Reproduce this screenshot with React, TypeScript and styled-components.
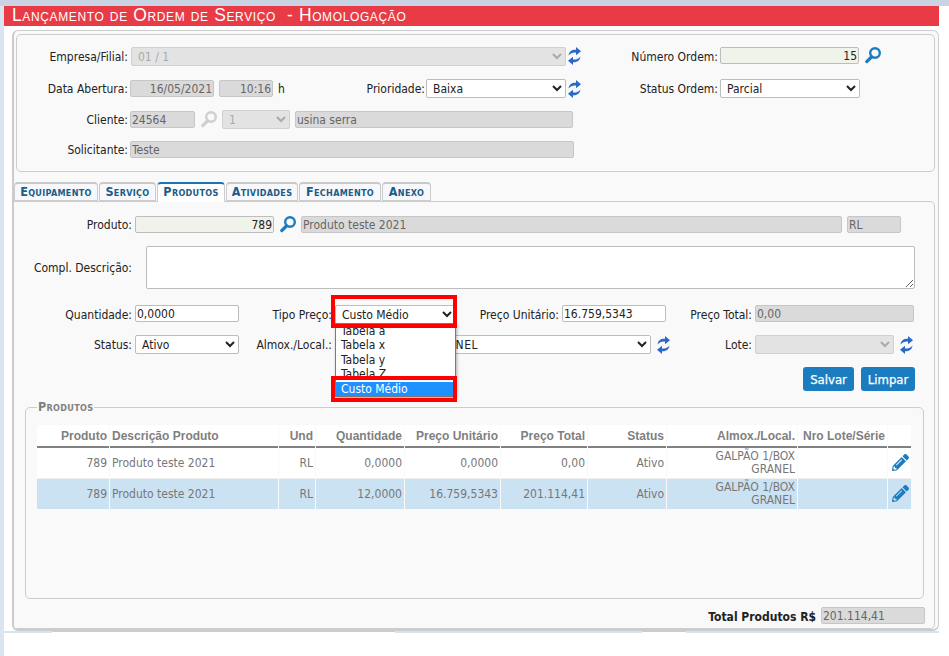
import React from 'react';
import styled, { createGlobalStyle } from 'styled-components';
import { FaPencilAlt } from 'react-icons/fa';

const GlobalStyle = createGlobalStyle`
  html, body {
    margin: 0;
    padding: 0;
    background: #fff;
  }
  body, input, select, textarea {
    font-family: "DejaVu Sans Condensed", "DejaVu Sans", sans-serif;
    font-size: 12px;
  }
`;

const Page = styled.div`
  width: 949px;
  height: 656px;
  overflow: hidden;
  display: flex;
  flex-direction: column;
  background: #fff;
`;

const TopBar = styled.div`
  height: 6px;
  flex: none;
  background: #c9d3e3;
`;

const Body = styled.div`
  flex: 1;
  border-left: 4px solid #dbe5f2;
`;

const Heading = styled.h1`
  width: 927px;
  height: 20px;
  margin: 0;
  padding-left: 8px;
  background: #e93b45;
  color: #fff;
  font-family: "Liberation Sans", sans-serif;
  font-size: 17.5px;
  font-weight: 400;
  font-variant: small-caps;
  letter-spacing: 0.62px;
  line-height: 19px;
  white-space: pre;
`;

const Card = styled.div`
  box-sizing: border-box;
  width: 927px;
  height: 601px;
  margin: 4px 0 0 8px;
  background: #f9f9f9;
  border: 1px solid #ccc;
  border-left-width: 2px;
  border-bottom-width: 2px;
  border-radius: 6px;
`;

const HeadBox = styled.div`
  box-sizing: border-box;
  width: 919px;
  height: 138px;
  margin: 3px 0 0 2px;
  border: 1px solid #ccc;
  border-radius: 5px;
`;

const Row = styled.div<{ $mt?: number; $h?: number; $top?: boolean; $end?: boolean }>`
  display: flex;
  align-items: ${p => (p.$top ? 'flex-start' : 'center')};
  justify-content: ${p => (p.$end ? 'flex-end' : 'flex-start')};
  height: ${p => p.$h ?? 19}px;
  margin-top: ${p => p.$mt ?? 0}px;
  padding-right: ${p => (p.$end ? 9 : 0)}px;
`;

const Label = styled.label<{ $w: number; $bold?: boolean }>`
  flex: none;
  align-self: center;
  width: ${p => p.$w}px;
  text-align: right;
  color: #222;
  white-space: nowrap;
  font-weight: ${p => (p.$bold ? 700 : 400)};
`;

const Input = styled.input<{ $w: number; $ml?: number; $tone?: 'off' | 'key' | 'on'; $right?: boolean }>`
  box-sizing: border-box;
  flex: none;
  width: ${p => p.$w}px;
  height: 17px;
  margin: 0 0 0 ${p => p.$ml ?? 2}px;
  padding: 0 1px;
  border: 1px solid ${p => (p.$tone === 'off' ? '#c6c6c6' : '#bdbdbd')};
  border-radius: 2px;
  outline: none;
  color: ${p => (p.$tone === 'off' ? '#666' : '#222')};
  background: ${p => (p.$tone === 'off' ? '#dadada' : p.$tone === 'key' ? '#f0f3ea' : '#fff')};
  text-align: ${p => (p.$right ? 'right' : 'left')};
`;

const Select = styled.select<{ $w: number; $ml?: number; $track?: boolean }>`
  box-sizing: border-box;
  flex: none;
  width: ${p => p.$w}px;
  height: 19px;
  margin: 0 0 0 ${p => p.$ml ?? 2}px;
  padding: 0 0 0 2px;
  border: 1px solid #bdbdbd;
  border-radius: 2px;
  outline: none;
  color: #222;
  background: #fff;
  letter-spacing: ${p => (p.$track ? '0.5px' : 'normal')};

  &:disabled {
    background: #e3e3e3;
    color: #aaa;
    border-color: #d0d0d0;
    opacity: 1;
  }
`;

const Unit = styled.span`
  flex: none;
  align-self: center;
  width: 12px;
  margin-left: 5px;
  color: #222;
`;

const IconSlot = styled.span<{ $ml: number; $w: number }>`
  flex: none;
  display: flex;
  width: ${p => p.$w}px;
  margin-left: ${p => p.$ml}px;
`;

const Tabs = styled.div`
  display: flex;
  gap: 1px;
  height: 19px;
  margin-top: 10px;
  position: relative;
  z-index: 1;
`;

const Tab = styled.div<{ $w: number; $active?: boolean }>`
  box-sizing: border-box;
  width: ${p => p.$w}px;
  height: ${p => (p.$active ? 20 : 19)}px;
  border: 1px solid #ccc;
  border-top: 2px solid ${p => (p.$active ? '#1b75bb' : '#c8c8c8')};
  border-bottom: ${p => (p.$active ? 'none' : '1px solid #ccc')};
  border-radius: 4px 4px 0 0;
  background: ${p => (p.$active ? '#fff' : '#f6f8fc')};
  color: #1b5c88;
  font-size: 12.5px;
  font-weight: 700;
  font-variant: small-caps;
  letter-spacing: 0.3px;
  line-height: 15px;
  text-align: center;
  white-space: nowrap;
`;

const TabPanel = styled.div`
  box-sizing: border-box;
  width: 921px;
  height: 428px;
  border-top: 1px solid #ccc;
  border-right: 1px solid #ccc;
  border-bottom: 1px solid #ccc;
  border-radius: 0 5px 5px 0;
`;

const Area = styled.textarea`
  box-sizing: border-box;
  flex: none;
  width: 769px;
  height: 43px;
  margin-left: 14px;
  border: 1px solid #bdbdbd;
  border-radius: 2px;
  outline: none;
  background: #fff;
`;

const PriceSelect = styled.div`
  position: relative;
  flex: none;
  display: flex;
  width: 121px;
  margin-left: 3px;
  z-index: 2;
`;

const OptionList = styled.ul`
  position: absolute;
  left: 0;
  top: 18px;
  box-sizing: border-box;
  width: 121px;
  height: 74px;
  margin: 0;
  padding: 0;
  list-style: none;
  overflow: hidden;
  background: #fff;
  border: 1px solid #7a7a7a;
  box-shadow: 1px 2px 3px rgba(0, 0, 0, 0.3);
`;

const OptionItem = styled.li<{ $picked?: boolean }>`
  height: 14.4px;
  padding-left: 5px;
  line-height: 14px;
  color: ${p => (p.$picked ? '#fff' : '#222')};
  background: ${p => (p.$picked ? '#1e90ff' : 'transparent')};
`;

const Highlight = styled.div<{ $top: number; $h: number }>`
  position: absolute;
  left: -4px;
  top: ${p => p.$top}px;
  box-sizing: border-box;
  width: 126px;
  height: ${p => p.$h}px;
  border: 4px solid #f00;
  pointer-events: none;
`;

const ButtonRow = styled.div`
  display: flex;
  justify-content: flex-end;
  gap: 7px;
  margin-top: 13px;
  padding-right: 19px;
`;

const ActionButton = styled.button<{ $w: number }>`
  width: ${p => p.$w}px;
  height: 24px;
  padding: 0;
  border: none;
  border-radius: 3px;
  background: #1b7dbf;
  color: #fff;
  font-family: "DejaVu Sans Condensed", sans-serif;
  font-size: 13px;
  font-weight: 400;
  -webkit-text-stroke: 0.25px #fff;
`;

const ListBox = styled.fieldset`
  box-sizing: border-box;
  width: 899px;
  height: 199px;
  margin: 9px 0 0 11px;
  padding: 0 0 0 11px;
  border: 1px solid #ccc;
  border-radius: 5px;
`;

const ListTitle = styled.legend`
  margin-left: 0;
  padding: 0 1px;
  color: #7f7f7f;
  font-size: 12.5px;
  font-weight: 700;
  font-variant: small-caps;
  letter-spacing: 0.3px;
  line-height: 14px;
`;

const Table = styled.table`
  width: 876px;
  margin: 11px 0 0 -1px;
  border-collapse: separate;
  border-spacing: 1px 0;
  table-layout: fixed;
`;

const Th = styled.th<{ $left?: boolean }>`
  height: 21px;
  padding: 0 2px;
  background: #fff;
  border-bottom: 2px solid #808080;
  color: #7f7f7f;
  font-family: "Liberation Sans", sans-serif;
  font-size: 12px;
  font-weight: 700;
  text-align: ${p => (p.$left ? 'left' : 'right')};
  white-space: nowrap;
`;

const Tr = styled.tr<{ $on?: boolean }>`
  & > td {
    background: ${p => (p.$on ? '#cbe2f3' : '#fff')};
    border-bottom: ${p => (p.$on ? '0' : '1px solid #f0f0f0')};
  }
`;

const Td = styled.td<{ $left?: boolean }>`
  height: 30px;
  padding: 0 2px;
  color: #777;
  line-height: 13px;
  text-align: ${p => (p.$left ? 'left' : 'right')};
`;

const EditCell = styled.td`
  box-sizing: border-box;
  height: 30px;
  padding: 2px 0 0 4px;
  color: #1b7dbf;
  font-size: 17px;
  line-height: 17px;
`;

const FootStrip = styled.div`
  display: flex;
  height: 2px;
  width: 935px;
`;

const FootPart = styled.div<{ $w: number; $open?: boolean }>`
  width: ${p => p.$w}px;
  background: ${p => (p.$open ? '#fff' : '#d5e5ee')};
  border-top: ${p => (p.$open ? '1px solid #ccc' : '0')};
`;

const Sync = () => (
  <svg width="13" height="18" viewBox="0 0 13 18" fill="#2a68c8">
    <path d="M.5 8.5C1 4.5 4 2.5 8 2.8V0l5 4.3-5 4V5.5C5 5.2 2.5 6 .5 8.5Z" />
    <path d="M12.5 9.5C12 13.5 9 15.5 5 15.2V18l-5-4.3 5-4v2.8c3 .3 5.5-.5 7.5-3Z" />
  </svg>
);

const Lens = ({ off }: { off?: boolean }) => {
  const tint = off ? '#cfcfcf' : '#1b7dbf';
  return (
    <svg width="16" height="17" viewBox="0 0 16 17" fill="none" stroke={tint}>
      <circle cx="10" cy="6" r="4.8" strokeWidth="2.4" />
      <path d="M6.4 10 1.8 14.6" strokeWidth="3.2" strokeLinecap="round" />
    </svg>
  );
};

const tabs = [
  { name: 'Equipamento', w: 84 },
  { name: 'Serviço', w: 57 },
  { name: 'Produtos', w: 68, active: true },
  { name: 'Atividades', w: 72 },
  { name: 'Fechamento', w: 82 },
  { name: 'Anexo', w: 49 },
];

const columns = [
  { name: 'Produto', w: 72 },
  { name: 'Descrição Produto', w: 168, left: true },
  { name: 'Und', w: 36 },
  { name: 'Quantidade', w: 88 },
  { name: 'Preço Unitário', w: 95 },
  { name: 'Preço Total', w: 86 },
  { name: 'Status', w: 78 },
  { name: 'Almox./Local.', w: 130 },
  { name: 'Nro Lote/Série', w: 89 },
  { name: '', w: 23 },
];

const rows = [
  { qty: '0,0000', unit: '0,0000', total: '0,00' },
  { qty: '12,0000', unit: '16.759,5343', total: '201.114,41', on: true },
];

export default function App() {
  return (
    <Page>
      <GlobalStyle />
      <TopBar />
      <Body>
        <Heading>Lançamento de Ordem de Serviço  - Homologação</Heading>
        <Card>
          <HeadBox>
            <Row $mt={12} $top>
              <Label $w={111}>Empresa/Filial:</Label>
              <Select $w={435} $ml={3} disabled defaultValue="01 / 1"><option>01 / 1</option></Select>
              <IconSlot $ml={2} $w={13}><Sync /></IconSlot>
              <Label $w={137}>Número Ordem:</Label>
              <Input $w={139} $tone="key" $right readOnly value="15" />
              <IconSlot $ml={6} $w={16}><Lens /></IconSlot>
            </Row>
            <Row $mt={13}>
              <Label $w={111}>Data Abertura:</Label>
              <Input $w={84} $tone="off" $right readOnly value="16/05/2021" />
              <Input $w={54} $ml={5} $tone="off" $right readOnly value="10:16" />
              <Unit>h</Unit>
              <Label $w={135}>Prioridade:</Label>
              <Select $w={140} $ml={1} defaultValue="Baixa"><option>Baixa</option></Select>
              <IconSlot $ml={2} $w={13}><Sync /></IconSlot>
              <Label $w={137}>Status Ordem:</Label>
              <Select $w={140} defaultValue="Parcial"><option>Parcial</option></Select>
            </Row>
            <Row $mt={12}>
              <Label $w={111}>Cliente:</Label>
              <Input $w={65} $tone="off" readOnly value="24564" />
              <IconSlot $ml={6} $w={16}><Lens off /></IconSlot>
              <Select $w={68} $ml={5} disabled defaultValue="1"><option>1</option></Select>
              <Input $w={278} $ml={5} $tone="off" readOnly value="usina serra" />
            </Row>
            <Row $mt={11}>
              <Label $w={111}>Solicitante:</Label>
              <Input $w={444} $tone="off" readOnly value="Teste" />
            </Row>
          </HeadBox>
          <Tabs>
            {tabs.map(t => (
              <Tab key={t.name} $w={t.w} $active={t.active}>{t.name}</Tab>
            ))}
          </Tabs>
          <TabPanel>
            <Row $mt={13}>
              <Label $w={118}>Produto:</Label>
              <Input $w={139} $ml={3} $tone="key" $right readOnly value="789" />
              <IconSlot $ml={6} $w={16}><Lens /></IconSlot>
              <Input $w={541} $ml={5} $tone="off" readOnly value="Produto teste 2021" />
              <Input $w={54} $ml={5} $tone="off" readOnly value="RL" />
            </Row>
            <Row $mt={12} $h={43}>
              <Label $w={118}>Compl. Descrição:</Label>
              <Area />
            </Row>
            <Row $mt={16} $top>
              <Label $w={118}>Quantidade:</Label>
              <Input $w={104} $ml={3} $tone="on" readOnly value="0,0000" />
              <Label $w={93}>Tipo Preço:</Label>
              <PriceSelect>
                <Select $w={121} $ml={0} defaultValue="Custo Médio"><option>Custo Médio</option></Select>
                <OptionList>
                  <OptionItem>Tabela a</OptionItem>
                  <OptionItem>Tabela x</OptionItem>
                  <OptionItem>Tabela y</OptionItem>
                  <OptionItem>Tabela Z</OptionItem>
                  <OptionItem $picked>Custo Médio</OptionItem>
                </OptionList>
                <Highlight $top={-10} $h={33} />
                <Highlight $top={71} $h={26} />
              </PriceSelect>
              <Label $w={103}>Preço Unitário:</Label>
              <Input $w={104} $ml={3} $tone="on" readOnly value="16.759,5343" />
              <Label $w={86}>Preço Total:</Label>
              <Input $w={159} $ml={3} $tone="off" readOnly value="0,00" />
            </Row>
            <Row $mt={11}>
              <Label $w={118}>Status:</Label>
              <Select $w={104} $ml={3} defaultValue="Ativo"><option>Ativo</option></Select>
              <Label $w={93}>Almox./Local.:</Label>
              <Select $w={316} $ml={3} $track defaultValue="GALPÃO 1/BOX GRANEL"><option>GALPÃO 1/BOX GRANEL</option></Select>
              <IconSlot $ml={6} $w={13}><Sync /></IconSlot>
              <Label $w={82}>Lote:</Label>
              <Select $w={139} $ml={3} disabled />
              <IconSlot $ml={6} $w={13}><Sync /></IconSlot>
            </Row>
            <ButtonRow>
              <ActionButton $w={51}>Salvar</ActionButton>
              <ActionButton $w={54}>Limpar</ActionButton>
            </ButtonRow>
            <ListBox>
              <ListTitle>Produtos</ListTitle>
              <Table>
                <colgroup>
                  {columns.map((c, i) => <col key={i} width={c.w} />)}
                </colgroup>
                <thead>
                  <tr>
                    {columns.map((c, i) => <Th key={i} $left={c.left}>{c.name}</Th>)}
                  </tr>
                </thead>
                <tbody>
                  {rows.map((r, i) => (
                    <Tr key={i} $on={r.on}>
                      <Td>789</Td>
                      <Td $left>Produto teste 2021</Td>
                      <Td>RL</Td>
                      <Td>{r.qty}</Td>
                      <Td>{r.unit}</Td>
                      <Td>{r.total}</Td>
                      <Td>Ativo</Td>
                      <Td>GALPÃO 1/BOX GRANEL</Td>
                      <Td />
                      <EditCell><FaPencilAlt /></EditCell>
                    </Tr>
                  ))}
                </tbody>
              </Table>
            </ListBox>
            <Row $mt={8} $top $end>
              <Label $w={120} $bold>Total Produtos R$</Label>
              <Input $w={104} $ml={5} $tone="off" readOnly value="201.114,41" />
            </Row>
          </TabPanel>
        </Card>
        <FootStrip>
          <FootPart $w={48} />
          <FootPart $w={343} $open />
          <FootPart $w={247} />
          <FootPart $w={44} $open />
          <FootPart $w={253} />
        </FootStrip>
      </Body>
    </Page>
  );
}
